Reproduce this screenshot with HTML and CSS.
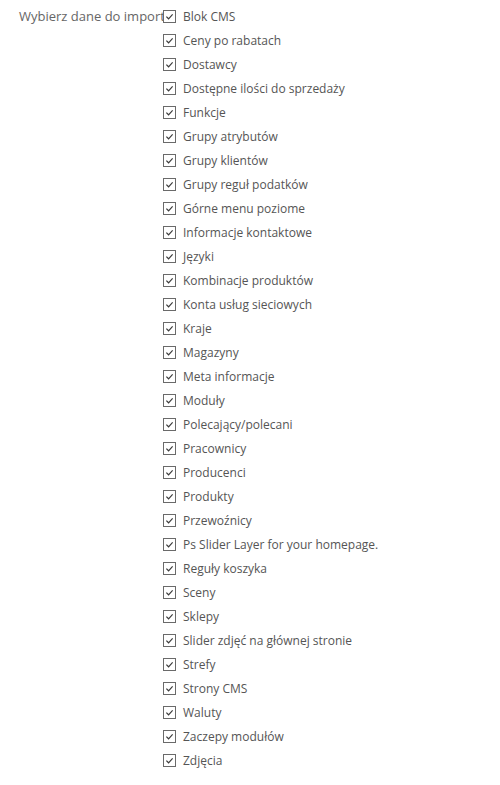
FILE: index.html
```html
<!DOCTYPE html>
<html lang="pl">
<head>
  <meta charset="UTF-8" />
  <meta name="viewport" content="width=device-width, initial-scale=1.0" />
  <title>Import</title>
  <link rel="stylesheet" href="styles.css">
</head>
<body>
  <div class="form-group">
    <div class="control-label">Wybierz dane do importu</div>
    <div class="options" id="options"></div>
  </div>

  <script>
    const items = [
      "Blok CMS", "Ceny po rabatach", "Dostawcy", "Dostępne ilości do sprzedaży",
      "Funkcje", "Grupy atrybutów", "Grupy klientów", "Grupy reguł podatków",
      "Górne menu poziome", "Informacje kontaktowe", "Języki", "Kombinacje produktów",
      "Konta usług sieciowych", "Kraje", "Magazyny", "Meta informacje", "Moduły",
      "Polecający/polecani", "Pracownicy", "Producenci", "Produkty", "Przewoźnicy",
      "Ps Slider Layer for your homepage.", "Reguły koszyka", "Sceny", "Sklepy",
      "Slider zdjęć na głównej stronie", "Strefy", "Strony CMS", "Waluty",
      "Zaczepy modułów", "Zdjęcia"
    ];

    const optionsEl = document.getElementById("options");
    const tick = '<svg viewBox="0 0 13 13" width="13" height="13"><path d="M2.8 6.6 L5.4 9.2 L10.2 3.9" fill="none" stroke="#3a3a3a" stroke-width="1.4"/></svg>';

    items.forEach(function (name) {
      const label = document.createElement("label");
      label.className = "option";
      label.innerHTML = '<span class="box">' + tick + '</span><span class="text">' + name + '</span>';
      optionsEl.appendChild(label);
    });
  </script>
</body>
</html>
```

FILE: styles.css
```css
body {
  font-family: "Open Sans", Arial, sans-serif;
  font-size: 12px;
  color: #555;
  background-color: #fff;
  margin: 0;
}

.form-group {
  display: flex;
  padding-top: 4px;
}

.control-label {
  width: 144px;
  padding-left: 19px;
  font-size: 13px;
  color: #666;
  white-space: nowrap;
  line-height: 24px;
}

.options {
  display: flex;
  flex-direction: column;
  position: relative;
  z-index: 1;
}

.option {
  display: flex;
  align-items: center;
  height: 24px;
  cursor: pointer;
}

.box {
  width: 11px;
  height: 11px;
  border: 1px solid #6a6a6a;
  background-color: #fff;
  display: flex;
  align-items: center;
  justify-content: center;
  margin-right: 7px;
}

.box svg {
  display: block;
}

.option:first-child {
  background: linear-gradient(to right, #fff 13px, transparent 13px);
}

.text {
  color: #555;
}
```
